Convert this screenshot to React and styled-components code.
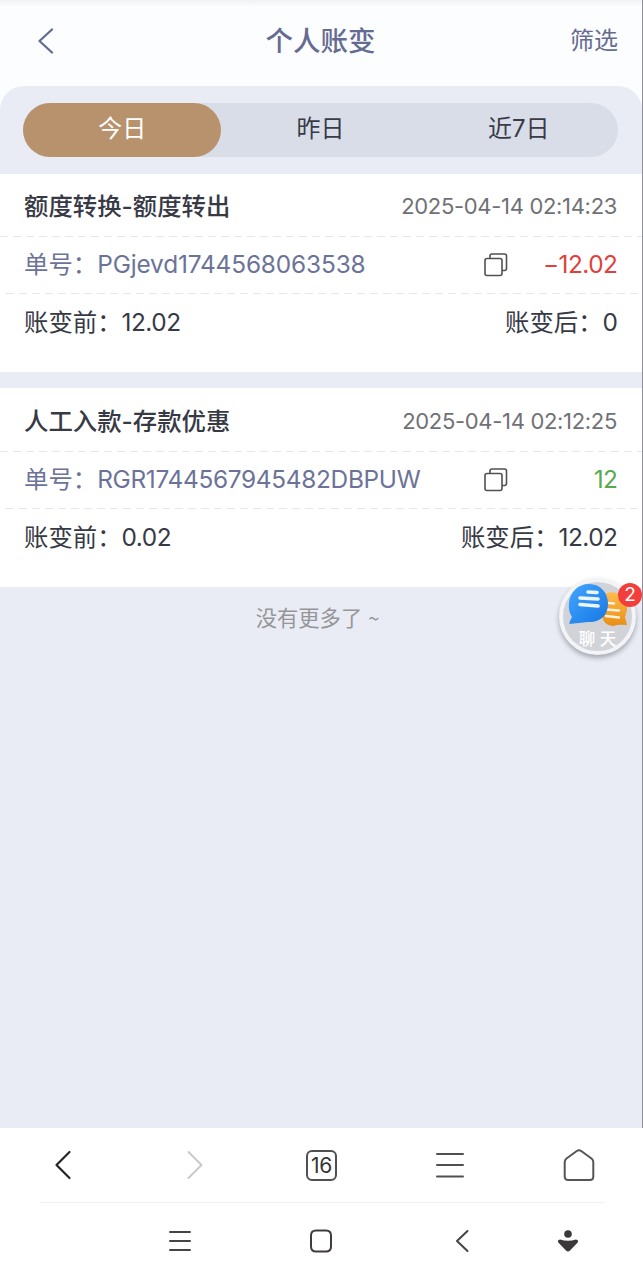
import React from "react";
import styled, { createGlobalStyle } from "styled-components";

const Global = createGlobalStyle`
  * { box-sizing: border-box; }
  body { margin: 0; background: #fff; font-family: Inter, "Noto Sans CJK SC", sans-serif; }
  svg { display: block; }
`;
const Screen = styled.div`
  width: 643px; height: 1280px; position: relative; overflow: hidden;
  display: flex; flex-direction: column; background: #fff;
`;
const Page = styled.main`
  height: 1128px; display: flex; flex-direction: column; background: #fcfdff;
  border-right: 1px solid #8f9097;
`;
const Header = styled.header`
  height: 86px; flex: none; display: grid; grid-template-columns: 1fr auto 1fr; align-items: center;
  padding: 0 24px 4px 36px; color: #656b91;
  background: linear-gradient(#f1f2f4 0, #fcfdff 7px);
`;
const Title = styled.h1`
  margin: 0 13px 0 0; font-size: 27.5px; line-height: 40px; font-weight: 500; color: #656b91;
`;
const Filter = styled.span`
  justify-self: end; font-size: 24px; line-height: 36px;
`;
const Body = styled.section`
  flex: 1; background: #e9ecf5; border-radius: 24px 24px 0 0; padding-top: 17px;
`;
const Tabs = styled.div`
  display: flex; height: 54px; margin: 0 24px 17px 23px; border-radius: 27px; background: #d9dde8;
`;
const Tab = styled.div`
  flex: 1; border-radius: 27px; text-align: center; font-size: 24px; line-height: 52px;
  color: ${p => (p.$active ? "#fff" : "#393c48")};
  background: ${p => (p.$active ? "#b8926c" : "transparent")};
`;
const Card = styled.article`
  height: ${p => p.$height}px; background: #fff; color: #373a45; margin-bottom: ${p => p.$gap}px;
  padding-top: ${p => p.$top}px;
`;
const Row = styled.div`
  height: ${p => p.$height}px; display: flex; align-items: center; white-space: nowrap;
  padding: 0 25px ${p => p.$lift || 0}px 24px;
  background-image: ${p => (p.$line ? "repeating-linear-gradient(90deg, #e6e7ea 0 8px, transparent 8px 13px)" : "none")};
  background-size: 100% 1.5px; background-repeat: no-repeat; background-position: ${p => p.$shift || 0}px 100%;
`;
const Label = styled.span`
  font-size: 24.4px; line-height: 36px; font-weight: ${p => (p.$bold ? 500 : 400)};
  color: ${p => p.$color || "#373a45"};
`;
const Digits = styled.span`letter-spacing: ${p => p.$track}px; margin-right: ${p => p.$track}px;`;
const Right = styled(Label)`margin-left: auto;`;
const Time = styled.time`
  margin-left: auto; font-size: 22px; line-height: 36px; color: #707175; letter-spacing: -0.32px;
`;
const CopySlot = styled.span`margin-left: auto; padding-top: 2px; width: 24px;`;
const Amount = styled(Label)`width: 110px; text-align: right; letter-spacing: -0.5px; margin-right: -0.5px;`;
const Empty = styled.p`
  margin: 0; padding-right: 7px; text-align: center; font-size: 21.3px; line-height: 61px; color: #969698;
`;
const Tilde = styled.span`font-family: "Noto Sans CJK SC", sans-serif; font-size: 20px;`;
const Bar = styled.nav`
  height: 74px; display: grid; grid-template-columns: repeat(5, 1fr); align-items: center; justify-items: center;
`;
const Divider = styled.hr`
  margin: 0 38px 0 40px; border: 0; height: 1px; background: #f1f1f1;
`;
const SystemBar = styled.nav`
  height: 77px; display: grid; grid-template-columns: repeat(3, 141px) 72px; align-items: center; justify-items: center;
  padding-left: 109px; padding-bottom: 1px;
`;
const Count = styled.span`
  width: 31px; height: 31px; border: 2px solid #505050; border-radius: 6px;
  text-align: center; font-size: 21px; line-height: 27px; color: #333; letter-spacing: -0.4px;
`;
const Chat = styled.aside`
  position: absolute; left: 559px; top: 578px; width: 77px; height: 77px; border-radius: 50%;
  background: #d2d3d9; border: 4px solid #f3f4f7; box-shadow: 0 3px 5px rgba(60,60,70,.4);
`;
const Bubbles = styled.svg`position: absolute; left: 5px; top: 1px;`;
const ChatText = styled.span`
  position: absolute; left: 0; right: 0; top: 46px; text-align: center; color: #fff;
  font-size: 16.5px; line-height: 22px; font-weight: 500; white-space: pre;
`;
const Badge = styled.span`
  position: absolute; left: 618px; top: 583px; width: 24px; height: 24px; border-radius: 50%;
  background: #f33f3b; color: #fff; font-size: 19px; line-height: 24px; text-align: center;
`;

const Stroke = ({ w, h, d, color = "#444", width = 2 }) => (
  <svg width={w} height={h} viewBox={`0 0 ${w} ${h}`} fill="none" stroke={color} strokeWidth={width} strokeLinecap="round" strokeLinejoin="round">
    <path d={d} />
  </svg>
);

const records = [
  { title: "额度转换-额度转出", time: "2025-04-14 02:14:23", no: "PGjevd1744568063538", track: -0.14, amount: "−12.02", color: "#e2403b", before: "12.02", after: "0", height: 198, gap: 16, top: 0 },
  { title: "人工入款-存款优惠", time: "2025-04-14 02:12:25", no: "RGR1744567945482DBPUW", track: -0.31, amount: "12", color: "#58a94c", before: "0.02", after: "12.02", height: 199, gap: 0, top: 1 },
];

function Record({ r }) {
  return (
    <Card $height={r.height} $gap={r.gap} $top={r.top}>
      <Row $height={63} $line>
        <Label $bold>{r.title}</Label>
        <Time>{r.time}</Time>
      </Row>
      <Row $height={57} $line $shift={6} $lift={3}>
        <Label $color="#6c7398">单号：<Digits $track={r.track}>{r.no}</Digits></Label>
        <CopySlot>
          <Stroke w={24} h={24} width={1.6} color="#505056" d="M3 5.5H16Q18 5.5 18 7.5V20.5Q18 22.5 16 22.5H3Q1 22.5 1 20.5V7.5Q1 5.5 3 5.5ZM6 5V3Q6 1 8 1H20.5Q22.5 1 22.5 3V15.5Q22.5 17.5 20.5 17.5H18.5" />
        </CopySlot>
        <Amount $color={r.color}>{r.amount}</Amount>
      </Row>
      <Row $height={57} $lift={1}>
        <Label>账变前：<Digits $track={-0.5}>{r.before}</Digits></Label>
        <Right>账变后：<Digits $track={-0.5}>{r.after}</Digits></Right>
      </Row>
    </Card>
  );
}

export default function App() {
  return (
    <Screen>
      <Global />
      <Page>
        <Header>
          <Stroke w={18} h={27} color="#656b91" width={2.3} d="M16 1.5L3.5 13L16 24.5" />
          <Title>个人账变</Title>
          <Filter>筛选</Filter>
        </Header>
        <Body>
          <Tabs>
            <Tab $active>今日</Tab>
            <Tab>昨日</Tab>
            <Tab>近7日</Tab>
          </Tabs>
          {records.map(r => <Record key={r.no} r={r} />)}
          <Empty>没有更多了 <Tilde>~</Tilde></Empty>
        </Body>
      </Page>
      <Bar>
        <Stroke w={20} h={30} color="#252525" width={2.2} d="M15.5 2L2.5 15L15.5 28" />
        <Stroke w={20} h={30} color="#c9c9c9" width={2} d="M5.5 2L18.5 15L5.5 28" />
        <Count>16</Count>
        <Stroke w={28} h={26} color="#505050" width={2} d="M1 2H27M1 13H27M1 24.5H27" />
        <Stroke w={32} h={32} color="#555" width={2} d="M13.8 2Q16 .5 18.2 2L28.5 9.5Q30.3 11 30.3 13V27.5Q30.3 31 26.8 31H5.2Q1.7 31 1.7 27.5V13Q1.7 11 3.5 9.5Z" />
      </Bar>
      <Divider />
      <SystemBar>
        <Stroke w={24} h={22} color="#484446" width={2} d="M2 2H22M2 11H22M2 20H22" />
        <Stroke w={24} h={24} color="#403c3e" width={2} d="M7 1.5H17Q22 1.5 22 6.5V17.5Q22 22.5 17 22.5H7Q2 22.5 2 17.5V6.5Q2 1.5 7 1.5Z" />
        <Stroke w={14} h={24} color="#444" width={2} d="M12.5 2L2 12L12.5 22" />
        <svg width="22" height="24" viewBox="0 0 22 24" fill="#3b383a">
          <circle cx="11" cy="5" r="3.8" />
          <path d="M3 10.5Q11 13 19 10.5Q22 11 20.7 13.5L13 21.5Q11 23.5 9 21.5L1.3 13.5Q0 11 3 10.5Z" />
        </svg>
      </SystemBar>
      <Chat>
        <Bubbles width="64" height="50" viewBox="0 0 64 50">
          <defs>
            <linearGradient id="blue" x2="1" y2="1"><stop stopColor="#43a6ff" /><stop offset="1" stopColor="#1676e3" /></linearGradient>
            <linearGradient id="gold" x2="0" y2="1"><stop stopColor="#ffbc4d" /><stop offset="1" stopColor="#e88e17" /></linearGradient>
          </defs>
          <path d="M38 10C50 7 60 15 59 27Q58 31 57 34L59 42Q51 41 45 43Q34 42 34 30Z" fill="url(#gold)" />
          <path d="M41 20L46 20.5M38 26.5L51 27.5M38 33L51 34.5" stroke="#fff2df" strokeWidth="2.5" strokeLinecap="round" />
          <path d="M21 1C33 1 40 10 40 21C40 33 31 40 20 39L1.5 41Q1 39 4 34Q0 28 1 20C2 9 10 1 21 1Z" fill="url(#blue)" />
          <path d="M20 9L29 9.5M12 15L30 16M12 21.5L30 23" stroke="#eaf5ff" strokeWidth="3.6" strokeLinecap="round" />
        </Bubbles>
        <ChatText>聊 天</ChatText>
      </Chat>
      <Badge>2</Badge>
    </Screen>
  );
}
